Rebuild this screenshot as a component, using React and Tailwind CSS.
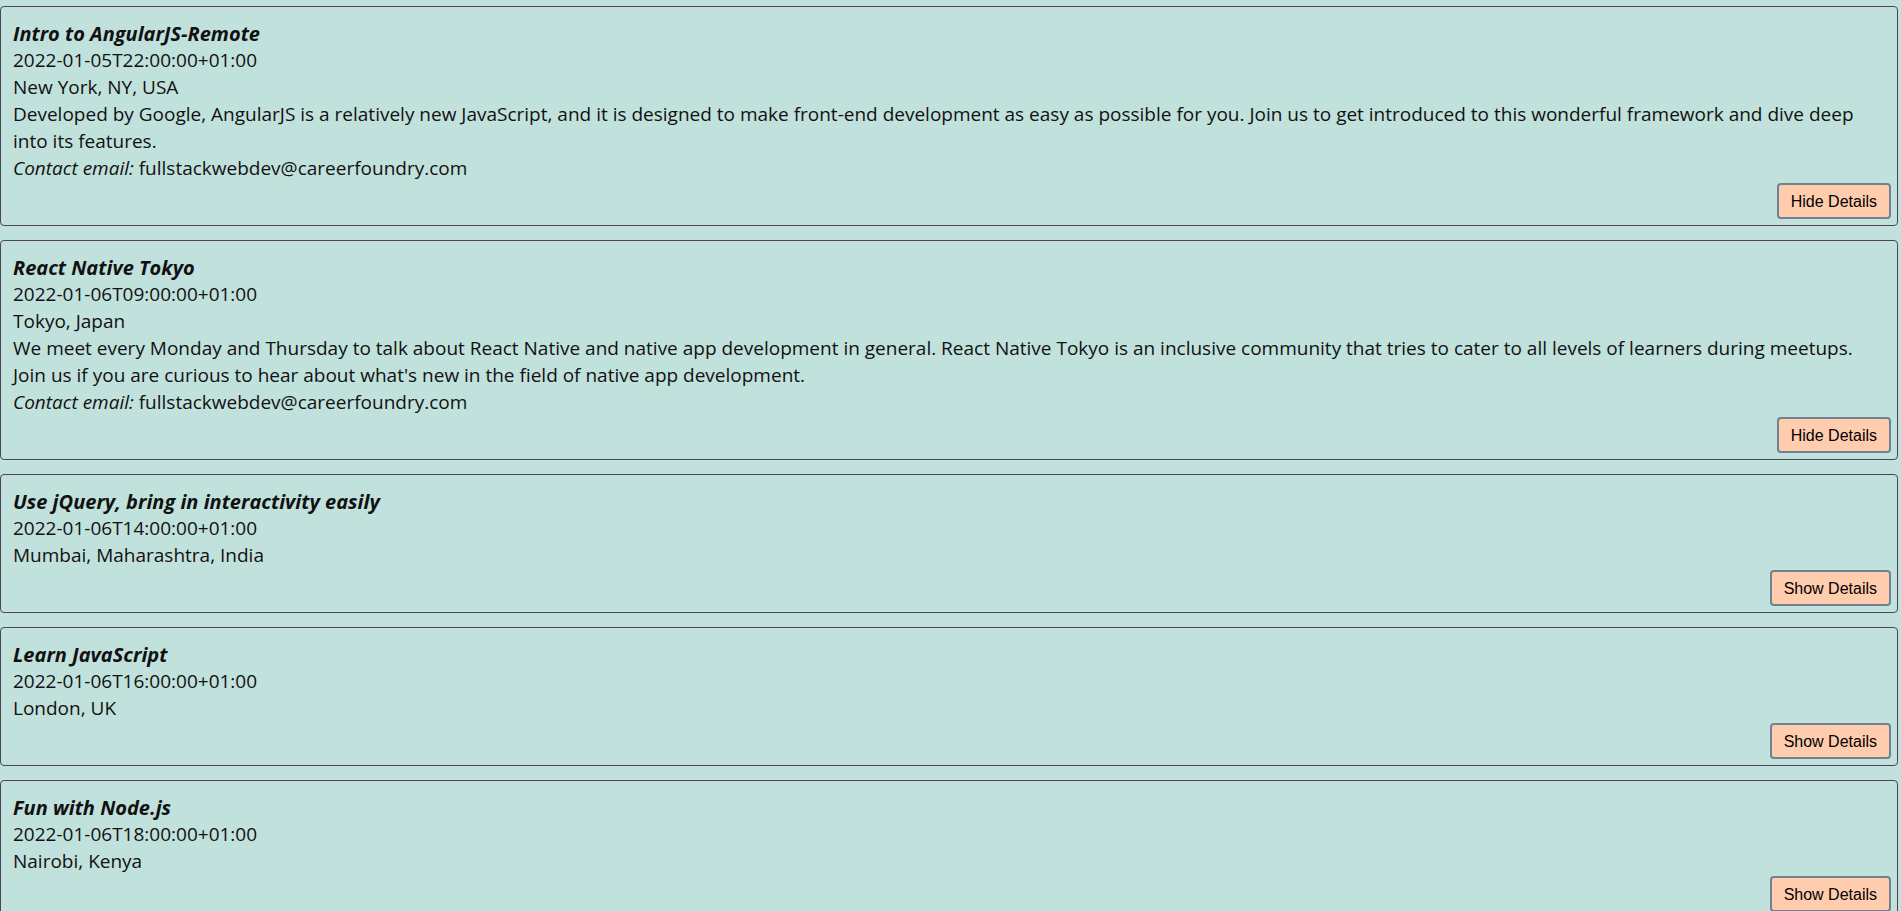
const events = [
  {
    id: 1,
    summary: 'Intro to AngularJS-Remote',
    start: '2022-01-05T22:00:00+01:00',
    location: 'New York, NY, USA',
    description:
      'Developed by Google, AngularJS is a relatively new JavaScript, and it is designed to make front-end development as easy as possible for you. Join us to get introduced to this wonderful framework and dive deep into its features.',
    open: true,
  },
  {
    id: 2,
    summary: 'React Native Tokyo',
    start: '2022-01-06T09:00:00+01:00',
    location: 'Tokyo, Japan',
    description:
      "We meet every Monday and Thursday to talk about React Native and native app development in general. React Native Tokyo is an inclusive community that tries to cater to all levels of learners during meetups. Join us if you are curious to hear about what's new in the field of native app development.",
    open: true,
  },
  {
    id: 3,
    summary: 'Use jQuery, bring in interactivity easily',
    start: '2022-01-06T14:00:00+01:00',
    location: 'Mumbai, Maharashtra, India',
    open: false,
  },
  {
    id: 4,
    summary: 'Learn JavaScript',
    start: '2022-01-06T16:00:00+01:00',
    location: 'London, UK',
    open: false,
  },
  {
    id: 5,
    summary: 'Fun with Node.js',
    start: '2022-01-06T18:00:00+01:00',
    location: 'Nairobi, Kenya',
    open: false,
  },
]

function Event({ event }) {
  return (
    <li className="mr-[3px] flex flex-col rounded-[4px] border border-[#4b4657] pt-[13px] pr-[6px] pb-[6px] pl-[12px]">
      <p className="text-[20px] font-bold italic">{event.summary}</p>
      <p>{event.start}</p>
      <p>{event.location}</p>
      {event.open && (
        <>
          <p className="pr-[12px]">{event.description}</p>
          <p>
            <em>Contact email:</em> fullstackwebdev@careerfoundry.com
          </p>
        </>
      )}
      <div className="mt-[1px] flex justify-end">
        <button className="h-[36px] rounded-[4px] border-2 border-[#718191] bg-[#ffcdae] px-[12px] font-['Liberation_Sans',Arial,sans-serif] text-[16px] text-black">
          {event.open ? 'Hide Details' : 'Show Details'}
        </button>
      </div>
    </li>
  )
}

export default function App() {
  return (
    <div className="min-h-screen bg-[#c1e1dc] pt-[6px] font-['Open_Sans',sans-serif] text-[19px] leading-[27px] text-[#111]">
      <ul className="flex flex-col gap-[14px]">
        {events.map((ev) => (
          <Event key={ev.id} event={ev} />
        ))}
      </ul>
    </div>
  )
}
